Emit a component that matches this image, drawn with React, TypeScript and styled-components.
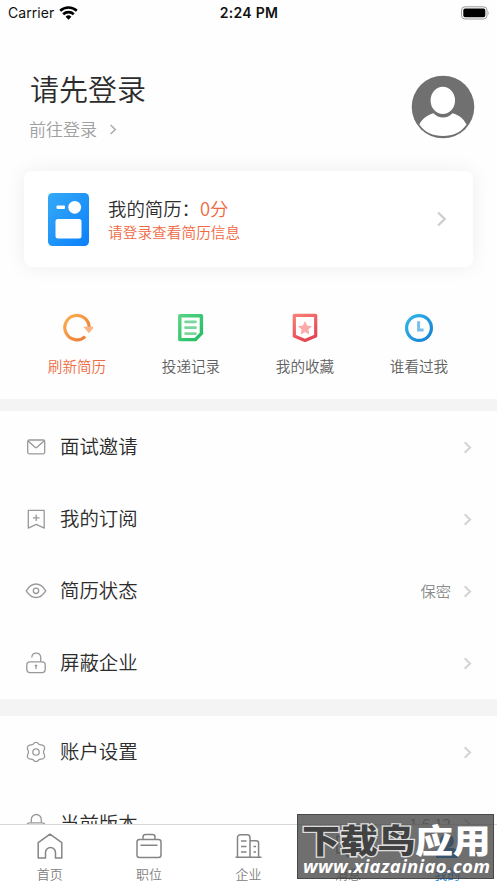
import React from 'react';
import styled, { createGlobalStyle } from 'styled-components';

const Global = createGlobalStyle`
  * { box-sizing: border-box; }
  body { margin: 0; background: #fff; }
`;

const Screen = styled.div`
  position: relative;
  display: flex;
  flex-direction: column;
  width: 497px;
  height: 883px;
  overflow: hidden;
  background: #fefefe;
  color: #2c2c2c;
  font-family: "Noto Sans CJK SC", sans-serif;
  font-weight: 350;
`;

const StatusBar = styled.header`
  display: grid;
  grid-template-columns: 1fr auto 1fr;
  align-items: center;
  flex: none;
  height: 26px;
  padding: 0 7px 0 8px;
  font: 14px/26px Inter, sans-serif;
  color: #111;
`;

const Carrier = styled.div`
  display: flex;
  align-items: center;
  gap: 5px;
  letter-spacing: 0.05px;
`;

const Clock = styled.strong`
  font-weight: 600;
  letter-spacing: 0.3px;
`;

const Battery = styled.svg`
  justify-self: end;
  margin-top: -1px;
`;

const Content = styled.main`
  flex: 1;
  min-height: 0;
  overflow: hidden;
`;

const Profile = styled.section`
  display: flex;
  justify-content: space-between;
  height: 145px;
  padding: 44px 22px 0 29px;
`;

const Heading = styled.h1`
  margin: 0 0 0 1px;
  font-size: 29px;
  line-height: 36px;
  font-weight: 350;
`;

const LoginLink = styled.div`
  display: flex;
  align-items: center;
  gap: 12px;
  margin-top: 10px;
  font-size: 17px;
  line-height: 26px;
  color: #a0a0a0;
`;

const Avatar = styled.svg`
  margin-top: 5px;
`;

const ResumeCard = styled.section`
  display: flex;
  align-items: center;
  height: 96px;
  margin: 0 24px;
  padding: 0 26px 0 24px;
  border-radius: 8px;
  background: #fff;
  box-shadow: 0 0 20px rgba(0, 0, 0, 0.07);
`;

const ResumeText = styled.div`
  flex: 1;
  margin-left: 19px;
`;

const ResumeTitle = styled.div`
  display: flex;
  font-size: 18.4px;
  line-height: 26px;
`;

const Score = styled.span`
  color: #ef6a43;
`;

const ResumeHint = styled.div`
  font-size: 14.7px;
  line-height: 22px;
  color: #ef6a43;
`;

const Actions = styled.nav`
  display: grid;
  grid-template-columns: repeat(4, 114px);
  height: 132px;
  padding: 46px 0 0 20px;
`;

const Action = styled.div<{ $color?: string }>`
  display: flex;
  flex-direction: column;
  align-items: center;
  gap: 12px;
  font-size: 14.6px;
  line-height: 22px;
  color: ${(p) => p.$color ?? '#606060'};
`;

const Divider = styled.div<{ $height: number }>`
  height: ${(p) => p.$height}px;
  background: #f4f4f4;
`;

const Row = styled.div`
  display: flex;
  align-items: center;
  height: 72px;
  padding: 0 25px 0 25px;
`;

const RowLabel = styled.span`
  flex: 1;
  margin-left: 13px;
  padding-bottom: 2px;
  font-size: 19.4px;
  line-height: 28px;
`;

const RowValue = styled.span`
  margin-right: 12px;
  padding-bottom: 3px;
  font-size: 15.3px;
  color: #8c8c8c;
`;

const TabBar = styled.footer`
  display: grid;
  grid-template-columns: repeat(5, 1fr);
  flex: none;
  height: 59px;
  border-top: 1px solid #d8d8d8;
  background: #fff;
`;

const Tab = styled.div<{ $active?: boolean }>`
  display: flex;
  flex-direction: column;
  align-items: center;
  padding-top: 7px;
  gap: 4px;
  font-size: 13px;
  line-height: 20px;
  color: ${(p) => (p.$active ? '#1384e8' : '#808080')};
`;

const Watermark = styled.aside`
  position: absolute;
  left: 297px;
  top: 814px;
  width: 197px;
  height: 65px;
  border: 1px solid #484848;
  background: rgba(68, 68, 68, 0.77);
  overflow: hidden;
  white-space: nowrap;
`;

const SiteName = styled.div`
  display: flex;
  margin: 3px 0 0 4px;
  font-size: 38px;
  line-height: 42px;
  font-weight: 900;
  color: #fff;
  letter-spacing: -0.3px;
  transform: scaleY(0.86);
`;

const Outlined = styled.span`
  color: #424242;
  -webkit-text-stroke: 3px #ddd;
  paint-order: stroke fill;
`;

const SiteUrl = styled.div`
  margin: -5px 0 0 5px;
  font: italic 700 18.5px/22px "Open Sans", sans-serif;
  color: #fff;
  letter-spacing: 0.38px;
`;

const Chevron = ({ w = 9, h = 13, color = '#d2d2d2', stroke = 2.1 }) => (
  <svg width={w} height={h} viewBox="0 0 9 14" fill="none" stroke={color} strokeWidth={stroke}>
    <path d="M1.5 1.3 7.3 7l-5.8 5.7" />
  </svg>
);

const LineIcon = ({ children }: { children: React.ReactNode }) => (
  <svg width="22" height="22" viewBox="0 0 22 22" fill="none" stroke="#999" strokeWidth="1.3" strokeLinejoin="round">
    {children}
  </svg>
);

const TabIcon = ({ children }: { children: React.ReactNode }) => (
  <svg width="28" height="28" viewBox="0 0 28 28" fill="none" stroke="#858585" strokeWidth="1.5" strokeLinejoin="round">
    {children}
  </svg>
);

const WifiIcon = () => (
  <svg width="19" height="14" viewBox="0 0 19 14" fill="none" stroke="#000" strokeWidth="2.6">
    <path d="M1.2 4.8a12 12 0 0 1 16.6 0M4.2 8.2a7.7 7.7 0 0 1 10.6 0" />
    <path d="M6.6 10.7a4.2 4.2 0 0 1 5.8 0L9.5 13.7Z" fill="#000" stroke="none" />
  </svg>
);

const ResumeIcon = () => (
  <svg width="41" height="53" viewBox="0 0 41 53">
    <defs>
      <linearGradient id="resume" x1="0" y1="0" x2="1" y2="1">
        <stop stopColor="#35aaf6" />
        <stop offset="1" stopColor="#0b80fb" />
      </linearGradient>
    </defs>
    <rect width="41" height="53" rx="4.5" fill="url(#resume)" />
    <rect x="8.5" y="12.6" width="8.5" height="3.4" rx="1" fill="#fff" />
    <circle cx="26.7" cy="14.3" r="6.4" fill="#fff" />
    <rect x="7.5" y="26" width="26" height="19.5" rx="2.5" fill="#fff" />
  </svg>
);

const RefreshIcon = () => (
  <svg width="32" height="30" viewBox="0 0 32 30" fill="none">
    <defs>
      <linearGradient id="refresh" x1="0" y1="0" x2="1" y2="1">
        <stop stopColor="#f9b04f" />
        <stop offset="1" stopColor="#ee7838" />
      </linearGradient>
    </defs>
    <path d="M24.2 23.6A12.2 12.2 0 1 1 28.2 14.6" stroke="url(#refresh)" strokeWidth="3.2" />
    <path d="M22.3 13.8h11L28 20.2Z" fill="#fbb483" />
  </svg>
);

const RecordsIcon = () => (
  <svg width="30" height="30" viewBox="0 0 30 30" fill="none">
    <defs>
      <linearGradient id="records" x1="0" y1="0" x2="1" y2="1">
        <stop stopColor="#55d483" />
        <stop offset="1" stopColor="#20bd63" />
      </linearGradient>
    </defs>
    <path d="M3.8 2.8h21.6v17.6l-6 6.2H3.8Z" stroke="url(#records)" strokeWidth="3.4" strokeLinejoin="round" />
    <path d="M9.500 8.8h10M9.500 14.7h10M9.500 20.6h10" stroke="#79d79c" strokeWidth="2.7" strokeLinecap="round" />
  </svg>
);

const FavouriteIcon = () => (
  <svg width="30" height="30" viewBox="0 0 30 30" fill="none">
    <defs>
      <linearGradient id="favourite" x1="0" y1="0" x2="0.5" y2="1">
        <stop stopColor="#f77d76" />
        <stop offset="1" stopColor="#e54654" />
      </linearGradient>
    </defs>
    <path d="M4.3 2.4h21.4v20.6L15 27.5 4.3 23Z" stroke="url(#favourite)" strokeWidth="3.2" strokeLinejoin="round" />
    <path d="m15 8 2.1 4.6 4.9.6-3.6 3.4.9 4.9-4.3-2.4-4.3 2.4.9-4.9L8 13.2l4.9-.6Z" fill="#fbaaac" />
  </svg>
);

const ViewedIcon = () => (
  <svg width="30" height="30" viewBox="0 0 30 30" fill="none">
    <defs>
      <linearGradient id="viewed" x1="0" y1="0" x2="1" y2="1">
        <stop stopColor="#31b6e9" />
        <stop offset="1" stopColor="#137fd5" />
      </linearGradient>
    </defs>
    <circle cx="15" cy="15" r="12.4" stroke="url(#viewed)" strokeWidth="3.2" />
    <path d="M14.6 8.2v8.9h5" stroke="#79bfe9" strokeWidth="3" />
  </svg>
);

const LockBody = () => <rect x="1.8" y="9.8" width="18.4" height="10.8" rx="3" />;

const menu = [
  {
    label: '面试邀请',
    icon: (
      <>
        <rect x="2.7" y="4" width="17" height="13.8" rx="1.5" />
        <path d="m3.2 5 6.8 6.2a1.5 1.5 0 0 0 2 0l7-6.2" />
      </>
    ),
  },
  { label: '我的订阅', icon: <path d="M3.3 2.4h15.9v17.7L11.2 16.4 3.3 20.1ZM11.2 6.5v6.6M7.9 9.8h6.6" /> },
  {
    label: '简历状态',
    value: '保密',
    icon: (
      <>
        <path d="M1.2 10.800Q5.5 4 11 4T20.8 10.800Q16.5 17.5 11 17.5T1.2 10.800Z" />
        <circle cx="11" cy="10.8" r="2.7" />
      </>
    ),
  },
  {
    label: '屏蔽企业',
    icon: (
      <>
        <LockBody />
        <path d="M6.8 5.6V5a4.5 4.5 0 0 1 8.9 0V9.8M11 12.5v4.6M9.7 13.7h2.6" />
      </>
    ),
  },
];

const App = () => (
  <Screen>
    <Global />
    <StatusBar>
      <Carrier>
        Carrier
        <WifiIcon />
      </Carrier>
      <Clock>2:24 PM</Clock>
      <Battery width="30" height="14" viewBox="0 0 30 14">
        <rect x="1.5" y="0.8" width="25.5" height="12.2" rx="3.5" fill="none" stroke="#999" />
        <rect x="3.3" y="2.6" width="22" height="8.7" rx="1.8" />
        <path d="M28.3 5v4.4q1.3-2.2 0-4.4" fill="#888" />
      </Battery>
    </StatusBar>

    <Content>
      <Profile>
        <div>
          <Heading>请先登录</Heading>
          <LoginLink>
            前往登录
            <Chevron w={8} h={11} color="#b0b0b0" />
          </LoginLink>
        </div>
        <Avatar width="64" height="64" viewBox="0 0 64 64">
          <circle cx="32" cy="32" r="31.3" fill="#707070" />
          <path d="M8.3 49.5C11 44 16 40 22.5 38.2c5 5.6 14 5.6 19 0C48 40 52.5 43.5 55.5 49.5 50 57.5 42 61 32 61S14 57.5 8.3 49.5Z" fill="#fff" />
          <ellipse cx="31.8" cy="25.4" rx="12.2" ry="13.7" fill="#fff" />
        </Avatar>
      </Profile>

      <ResumeCard>
        <ResumeIcon />
        <ResumeText>
          <ResumeTitle>
            我的简历：<Score>0分</Score>
          </ResumeTitle>
          <ResumeHint>请登录查看简历信息</ResumeHint>
        </ResumeText>
        <Chevron w={11} h={16} color="#cecece" />
      </ResumeCard>

      <Actions>
        <Action $color="#ef6a43"><RefreshIcon />刷新简历</Action>
        <Action><RecordsIcon />投递记录</Action>
        <Action><FavouriteIcon />我的收藏</Action>
        <Action><ViewedIcon />谁看过我</Action>
      </Actions>

      <Divider $height={12} />
      {menu.map(({ label, value, icon }) => (
        <Row key={label}>
          <LineIcon>{icon}</LineIcon>
          <RowLabel>{label}</RowLabel>
          {value && <RowValue>{value}</RowValue>}
          <Chevron />
        </Row>
      ))}

      <Divider $height={17} />
      <Row>
        <LineIcon>
          <path d="M8.2 3.2C9.7.8 12.300.8 13.800 3.200 16 4.500 17.500 2.800 19.300 5.500 20.800 8.200 18.300 8.600 18.500 11 18.300 13.400 20.800 13.800 19.300 16.500 17.500 19.200 16 17.500 13.800 18.800 12.300 21.200 9.700 21.200 8.200 18.800 6 17.500 4.500 19.200 2.700 16.500 1.200 13.800 3.700 13.400 3.500 11 3.700 8.600 1.200 8.200 2.700 5.500 4.500 2.800 6 4.500 8.200 3.200Z" />
          <circle cx="11" cy="11" r="3.200" />
        </LineIcon>
        <RowLabel>账户设置</RowLabel>
        <Chevron />
      </Row>
      <Row>
        <LineIcon>
          <LockBody />
          <path d="M6.3 9.8V6.500a5 5 0 0 1 10 0v3.3" />
        </LineIcon>
        <RowLabel>当前版本</RowLabel>
        <RowValue>1.6.12</RowValue>
        <Chevron />
      </Row>
    </Content>

    <TabBar>
      <Tab>
        <TabIcon><path d="M2.2 26V10.6L14 2.2l11.8 8.4V26h-6.3v-5.5a5 5 0 0 0-10 0V26Z" /></TabIcon>
        首页
      </Tab>
      <Tab>
        <TabIcon>
          <rect x="2" y="7.5" width="24" height="18" rx="2.5" />
          <path d="M8 7.5V5a2.5 2.5 0 0 1 2.5-2.5h7A2.5 2.5 0 0 1 20 5v2.5M5.500 13.3h17" />
        </TabIcon>
        职位
      </Tab>
      <Tab>
        <TabIcon>
          <path d="M1.5 25.3h26M3.5 25V5.5A2.8 2.8 0 0 1 6.3 2.7h6.9A2.8 2.8 0 0 1 16 5.5V25M16 8.8h6.2a2.4 2.4 0 0 1 2.4 2.4V25M7 9h5.5M7 14.5h5.5M7 20h5.5M19.5 14.5h2.5M19.5 20h2.5" />
        </TabIcon>
        企业
      </Tab>
      <Tab>
        <TabIcon><path d="M3 4h22v17h-8l-3 4-3-4H3ZM8 10h12M8 15h8" /></TabIcon>
        消息
      </Tab>
      <Tab $active>
        <svg width="28" height="28" viewBox="0 0 28 28" fill="#1384e8">
          <circle cx="14" cy="9" r="7" />
          <path d="M3 26v-4q0-6 6-6h10q6 0 6 6v4Z" />
        </svg>
        我的
      </Tab>
    </TabBar>

    <Watermark>
      <SiteName><Outlined>下载鸟</Outlined>应用</SiteName>
      <SiteUrl>www.xiazainiao.com</SiteUrl>
    </Watermark>
  </Screen>
);

export default App;
